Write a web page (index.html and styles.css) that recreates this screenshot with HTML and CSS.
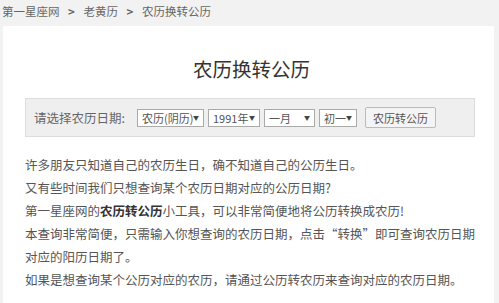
FILE: index.html
```html
<!DOCTYPE html>
<html lang="zh-CN">
<head>
    <meta charset="UTF-8">
    <title>农历换转公历</title>
    <link rel="stylesheet" href="styles.css">
</head>
<body>
    <div class="crumbs">
        <a href="#">第一星座网</a>
        <span class="sep">&gt;</span>
        <a href="#">老黄历</a>
        <span class="sep">&gt;</span>
        <span>农历换转公历</span>
    </div>

    <div class="panel">
        <h1>农历换转公历</h1>

        <div class="query-box">
            <span class="label">请选择农历日期:</span>
            <span class="sel-wrap"><select class="sel sel-type"><option>农历(阴历)</option></select></span>
            <span class="sel-wrap"><select class="sel sel-year"><option>1991年</option></select></span>
            <span class="sel-wrap"><select class="sel sel-month"><option>一月</option></select></span>
            <span class="sel-wrap"><select class="sel sel-day"><option>初一</option></select></span>
            <button class="btn">农历转公历</button>
        </div>

        <div class="intro">
            <p>许多朋友只知道自己的农历生日，确不知道自己的公历生日。</p>
            <p>又有些时间我们只想查询某个农历日期对应的公历日期?</p>
            <p>第一星座网的<b>农历转公历</b>小工具，可以非常简便地将公历转换成农历!</p>
            <p>本查询非常简便，只需输入你想查询的农历日期，点击“转换”即可查询农历日期对应的阳历日期了。</p>
            <p>如果是想查询某个公历对应的农历，请通过公历转农历来查询对应的农历日期。</p>
        </div>
    </div>
</body>
</html>
```

FILE: styles.css
```css
body {
    margin: 0;
    background-color: #f2f2f2;
    font-family: "Microsoft YaHei", "Noto Sans CJK SC", sans-serif;
    color: #444;
}

.crumbs {
    height: 24px;
    line-height: 22px;
    padding-left: 2px;
    font-size: 11.5px;
    color: #666;
}

.crumbs a {
    color: #666;
    text-decoration: none;
}

.crumbs .sep {
    margin: 0 6px;
    font-weight: bold;
}

.panel {
    margin: 2px 5px 0 3px;
    background-color: #fff;
    padding: 28px 10px 0 22px;
    height: 277px;
    box-sizing: border-box;
    overflow: hidden;
}

h1 {
    margin: 0 6px 0 0;
    text-align: center;
    font-size: 19.5px;
    font-weight: normal;
    color: #333;
    line-height: 30px;
}

.query-box {
    display: flex;
    align-items: center;
    margin-top: 14px;
    width: 450px;
    height: 39px;
    background-color: #efefef;
    border: 1px solid #ddd;
    padding-left: 8px;
    box-sizing: border-box;
}

.label {
    font-size: 12.5px;
    color: #666;
    margin-right: 12px;
}

.sel-wrap {
    position: relative;
    margin-right: 4px;
    display: inline-block;
}

.sel-wrap::after {
    content: "\25BC";
    position: absolute;
    right: 5px;
    top: 4px;
    font-size: 6px;
    color: #444;
    pointer-events: none;
}

.sel {
    display: block;
    appearance: none;
    -webkit-appearance: none;
    height: 18px;
    font-size: 11px;
    font-family: "Microsoft YaHei", "Noto Sans CJK SC", sans-serif;
    color: #555;
    border: 1px solid #aaa;
    background-color: #fff;
    padding: 0 2px 0 4px;
    border-radius: 0;
    outline: none;
}

.sel-type { width: 67px; }
.sel-year { width: 52px; }
.sel-month { width: 51px; }
.sel-day { width: 38px; }

.btn {
    margin-left: 4px;
    height: 21px;
    width: 71px;
    padding: 0;
    font-size: 11px;
    font-family: "Microsoft YaHei", "Noto Sans CJK SC", sans-serif;
    color: #555;
    background-color: #f4f4f4;
    border: 1px solid #bbb;
    border-radius: 2px;
}

.intro {
    margin-top: 16px;
    font-size: 12.5px;
    line-height: 23px;
    color: #555;
    width: 458px;
}

.intro p {
    margin: 0;
}

.intro b {
    color: #333;
}
```
